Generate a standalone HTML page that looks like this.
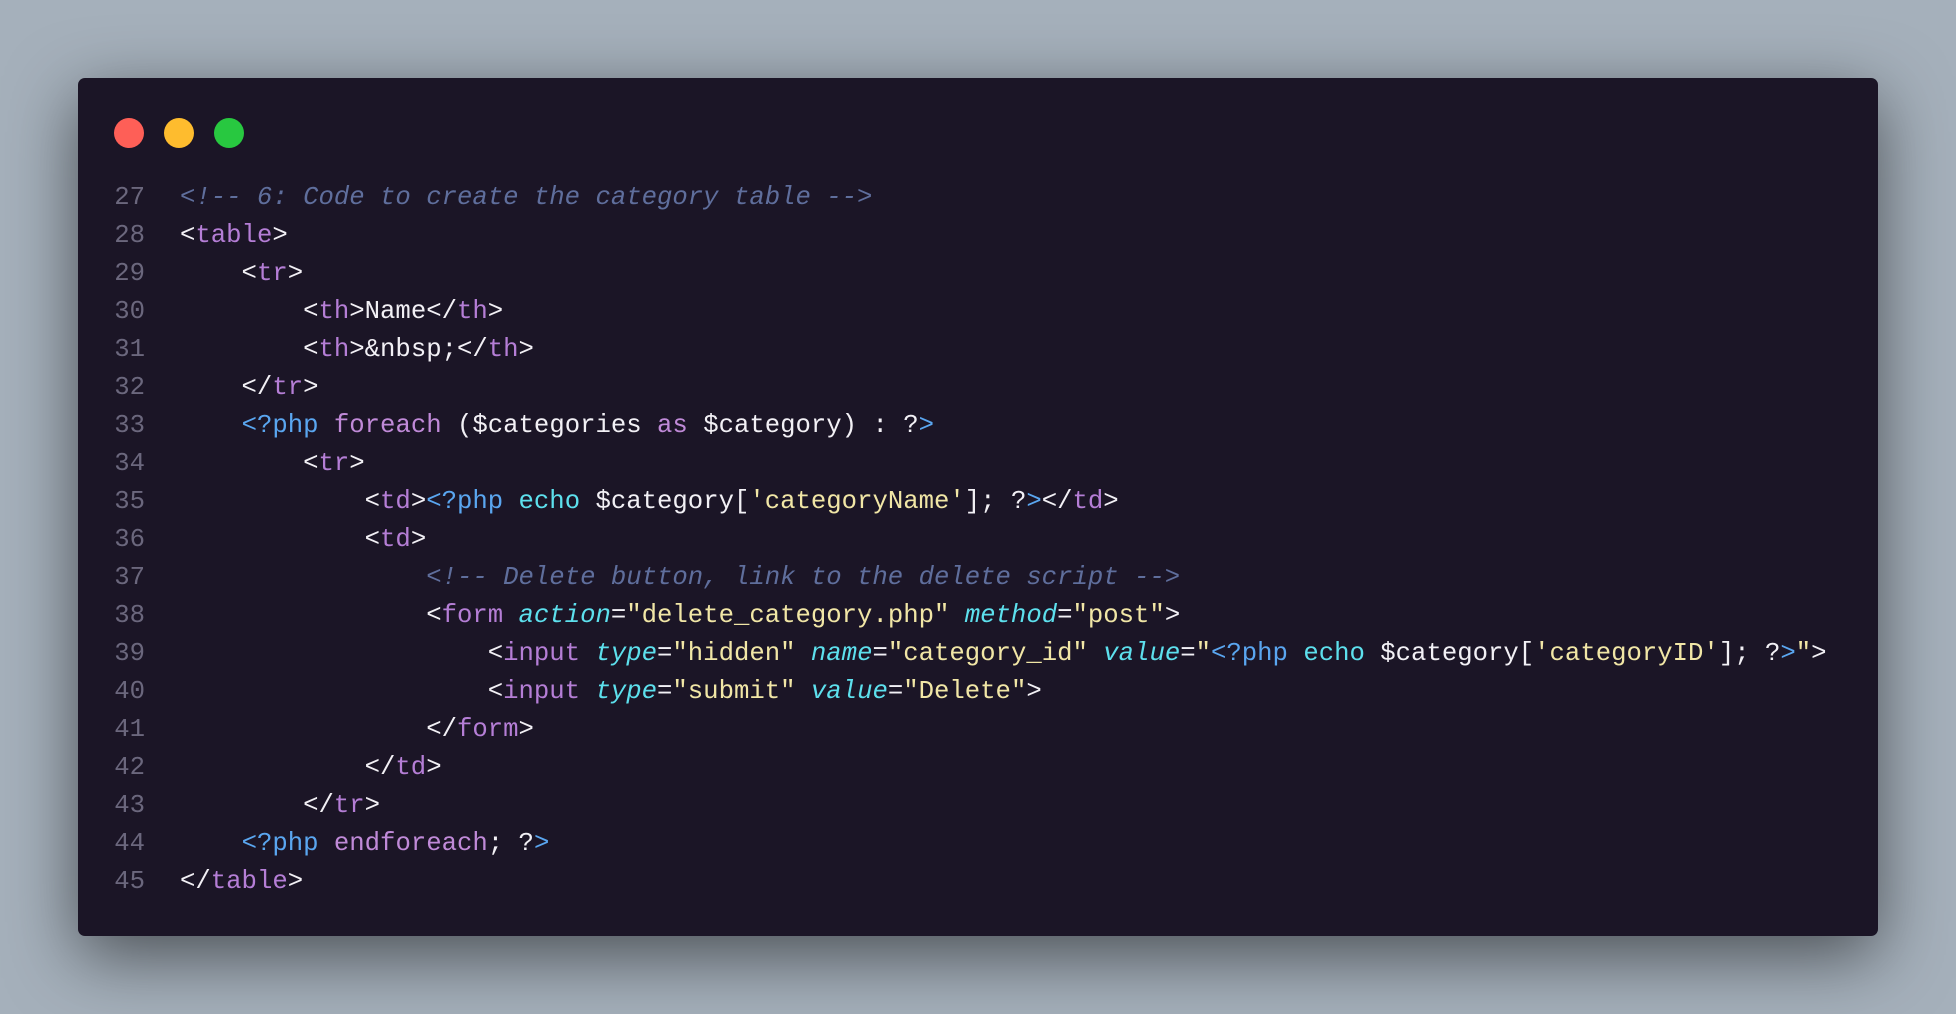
<!DOCTYPE html>
<html><head><meta charset="utf-8"><style>
html,body{margin:0;padding:0;width:1956px;height:1014px;overflow:hidden;background:#a5b0bb;}
.win{position:absolute;left:78px;top:78px;width:1800px;height:858px;background:#1b1526;border-radius:7px;box-shadow:0 20px 70px rgba(0,0,0,0.55);}
.dot{position:absolute;top:118px;width:30px;height:30px;border-radius:50%;}
pre{position:absolute;left:0;top:179px;margin:0;font-family:"Liberation Mono",monospace;font-size:25.65px;line-height:38px;color:#f2f0f5;}
.n{display:inline-block;width:145px;text-align:right;padding-right:35px;color:#6b677d;}
.c{color:#5f6e9c;font-style:italic}
.t{color:#b57ed6}
.a{color:#5de0ed;font-style:italic}
.s{color:#f1e6a6}
.p{color:#5aa6f0}
.k{color:#c08ad8}
.e{color:#5de0ed}
</style></head><body>
<div class="win"></div>
<div class="dot" style="left:114px;background:#fe5f57"></div>
<div class="dot" style="left:164px;background:#febc2e"></div>
<div class="dot" style="left:214px;background:#28c840"></div>
<pre><span class="n">27</span><span class="c">&lt;!-- 6: Code to create the category table --&gt;</span>
<span class="n">28</span>&lt;<span class="t">table</span>&gt;
<span class="n">29</span>    &lt;<span class="t">tr</span>&gt;
<span class="n">30</span>        &lt;<span class="t">th</span>&gt;Name&lt;/<span class="t">th</span>&gt;
<span class="n">31</span>        &lt;<span class="t">th</span>&gt;&amp;nbsp;&lt;/<span class="t">th</span>&gt;
<span class="n">32</span>    &lt;/<span class="t">tr</span>&gt;
<span class="n">33</span>    <span class="p">&lt;?php</span> <span class="k">foreach</span> ($categories <span class="k">as</span> $category) : ?<span class="p">&gt;</span>
<span class="n">34</span>        &lt;<span class="t">tr</span>&gt;
<span class="n">35</span>            &lt;<span class="t">td</span>&gt;<span class="p">&lt;?php</span> <span class="e">echo</span> $category[<span class="s">'categoryName'</span>]; ?<span class="p">&gt;</span>&lt;/<span class="t">td</span>&gt;
<span class="n">36</span>            &lt;<span class="t">td</span>&gt;
<span class="n">37</span>                <span class="c">&lt;!-- Delete button, link to the delete script --&gt;</span>
<span class="n">38</span>                &lt;<span class="t">form</span> <span class="a">action</span>=<span class="s">"delete_category.php"</span> <span class="a">method</span>=<span class="s">"post"</span>&gt;
<span class="n">39</span>                    &lt;<span class="t">input</span> <span class="a">type</span>=<span class="s">"hidden"</span> <span class="a">name</span>=<span class="s">"category_id"</span> <span class="a">value</span>=<span class="s">"</span><span class="p">&lt;?php</span> <span class="e">echo</span> $category[<span class="s">'categoryID'</span>]; ?<span class="p">&gt;</span><span class="s">"</span>&gt;
<span class="n">40</span>                    &lt;<span class="t">input</span> <span class="a">type</span>=<span class="s">"submit"</span> <span class="a">value</span>=<span class="s">"Delete"</span>&gt;
<span class="n">41</span>                &lt;/<span class="t">form</span>&gt;
<span class="n">42</span>            &lt;/<span class="t">td</span>&gt;
<span class="n">43</span>        &lt;/<span class="t">tr</span>&gt;
<span class="n">44</span>    <span class="p">&lt;?php</span> <span class="k">endforeach</span>; ?<span class="p">&gt;</span>
<span class="n">45</span>&lt;/<span class="t">table</span>&gt;</pre>
</body></html>
